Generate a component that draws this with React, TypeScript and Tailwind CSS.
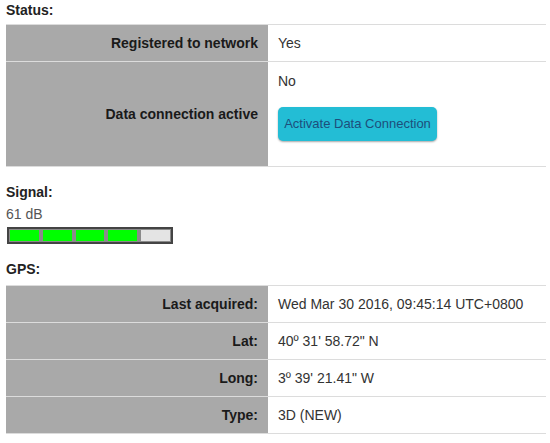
import React from 'react';

const font = { fontFamily: '"Liberation Sans", Arial, sans-serif' };

type Row = { label: string; value: React.ReactNode; h: string; valign?: string };

const InfoTable: React.FC<{ rows: Row[] }> = ({ rows }) => (
  <table className="w-[540px] border-collapse text-[14px]">
    <tbody>
      {rows.map((r) => (
        <tr key={r.label} className={`${r.h} border-t border-b border-[#dcdcdc]`}>
          <td className="w-[262px] bg-[#a9a9a9] pr-[10px] text-right font-bold text-[#1a1a1a] align-middle">
            {r.label}
          </td>
          <td className={`pl-[10px] text-[#333] ${r.valign ?? 'align-middle'}`}>{r.value}</td>
        </tr>
      ))}
    </tbody>
  </table>
);

const SignalBar: React.FC<{ level: number }> = ({ level }) => (
  <div className="flex w-[166px] h-[17px] border-2 border-[#444] bg-[#8a8a8a] gap-[4px] p-px">
    {[0, 1, 2, 3, 4].map((i) => (
      <div key={i} className={`flex-1 ${i < level ? 'bg-[#00ff00]' : 'bg-[#e4e4e4]'}`} />
    ))}
  </div>
);

const App: React.FC = () => {
  return (
    <div className="min-h-screen bg-white px-[6px] pt-[2px]" style={font}>
      <h3 className="text-[14px] font-bold text-[#222] leading-[17px]">Status:</h3>
      <div className="mt-[5px]">
        <InfoTable
          rows={[
            { label: 'Registered to network', value: 'Yes', h: 'h-[37px]' },
            {
              label: 'Data connection active',
              h: 'h-[105px]',
              valign: 'align-top',
              value: (
                <div className="pt-[9px]">
                  <div className="leading-[20px]">No</div>
                  <button className="mt-[16px] h-[34px] w-[159px] rounded-[5px] bg-[#23bdd5] text-[13px] text-[#1d4f7c] shadow-[0_1px_2px_rgba(0,0,0,0.35)]">
                    Activate Data Connection
                  </button>
                </div>
              ),
            },
          ]}
        />
      </div>

      <h3 className="mt-[17px] text-[14px] font-bold text-[#222] leading-[17px]">Signal:</h3>
      <div className="mt-[5px] text-[14px] text-[#555] leading-[17px]">61 dB</div>
      <div className="mt-[4px] ml-px">
        <SignalBar level={4} />
      </div>

      <h3 className="mt-[17px] text-[14px] font-bold text-[#222] leading-[17px]">GPS:</h3>
      <div className="mt-[7px]">
        <InfoTable
          rows={[
            { label: 'Last acquired:', value: 'Wed Mar 30 2016, 09:45:14 UTC+0800', h: 'h-[37px]' },
            { label: 'Lat:', value: '40º 31\' 58.72" N', h: 'h-[37px]' },
            { label: 'Long:', value: '3º 39\' 21.41" W', h: 'h-[37px]' },
            { label: 'Type:', value: '3D (NEW)', h: 'h-[37px]' },
          ]}
        />
      </div>
    </div>
  );
};

export default App;
